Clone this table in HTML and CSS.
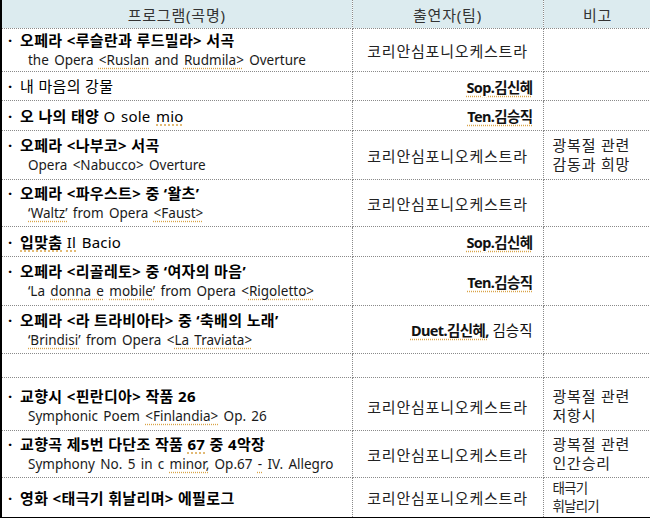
FILE: index.html
```html
<!DOCTYPE html>
<html lang="ko">
<head>
<meta charset="utf-8">
<title>프로그램</title>
<link rel="stylesheet" href="styles.css">
</head>
<body>
<table class="prog">
  <colgroup><col class="c1"><col class="c2"><col class="c3"></colgroup>
  <thead>
    <tr class="hd"><th>프로그램(곡명)</th><th>출연자(팀)</th><th>비고</th></tr>
  </thead>
  <tbody>
    <tr class="h43">
      <td class="t"><div class="ko"><span class="bul">·</span><b>오페라 &lt;루슬란과 루드밀라&gt; 서곡</b></div><div class="en">the Opera <span class="sq">&lt;Ruslan</span> and <span class="sq">Rudmila&gt;</span> Overture</div></td>
      <td class="ctr">코리안심포니오케스트라</td><td class="n"></td>
    </tr>
    <tr class="h29">
      <td class="t"><div class="ko"><span class="bul">·</span>내 마음의 강물</div></td>
      <td class="rt"><b class="sq">Sop.김신혜</b></td><td class="n"></td>
    </tr>
    <tr class="h30">
      <td class="t"><div class="ko"><span class="bul">·</span><b>오 나의 태양</b> <span class="lat">O sole <span class="sq">mio</span></span></div></td>
      <td class="rt"><b class="sq">Ten.김승직</b></td><td class="n"></td>
    </tr>
    <tr class="h49">
      <td class="t"><div class="ko"><span class="bul">·</span><b>오페라 &lt;나부코&gt; 서곡</b></div><div class="en">Opera &lt;Nabucco&gt; Overture</div></td>
      <td class="ctr">코리안심포니오케스트라</td><td class="n">광복절 관련<br>감동과 희망</td>
    </tr>
    <tr class="h47">
      <td class="t"><div class="ko"><span class="bul">·</span><b>오페라 &lt;파우스트&gt; 중 ‘왈츠’</b></div><div class="en"><span class="sq">‘Waltz’</span> from Opera <span class="sq">&lt;Faust&gt;</span></div></td>
      <td class="ctr">코리안심포니오케스트라</td><td class="n"></td>
    </tr>
    <tr class="h30">
      <td class="t"><div class="ko"><span class="bul">·</span><b class="sq">입맞춤</b> <span class="lat"><span class="sq">Il</span> Bacio</span></div></td>
      <td class="rt"><b class="sq">Sop.김신혜</b></td><td class="n"></td>
    </tr>
    <tr class="h49">
      <td class="t"><div class="ko"><span class="bul">·</span><b>오페라 &lt;리골레토&gt; 중 ‘여자의 마음’</b></div><div class="en">‘La <span class="sq">donna e</span> <span class="sq">mobile’</span> from Opera &lt;<span class="sq">Rigoletto&gt;</span></div></td>
      <td class="rt"><b class="sq">Ten.김승직</b></td><td class="n"></td>
    </tr>
    <tr class="h48">
      <td class="t"><div class="ko"><span class="bul">·</span><b>오페라 &lt;라 트라비아타&gt; 중 ‘축배의 노래’</b></div><div class="en"><span class="sq">‘Brindisi’</span> from Opera &lt;<span class="sq">La Traviata&gt;</span></div></td>
      <td class="rt"><b class="sq">Duet.김신혜,</b> 김승직</td><td class="n"></td>
    </tr>
    <tr class="h24">
      <td class="t"></td><td></td><td class="n"></td>
    </tr>
    <tr class="h53">
      <td class="t low"><div class="ko"><span class="bul">·</span><b>교향시 &lt;핀란디아&gt; 작품 26</b></div><div class="en">Symphonic Poem <span class="sq">&lt;Finlandia&gt;</span> Op. 26</div></td>
      <td class="ctr low">코리안심포니오케스트라</td><td class="n low">광복절 관련<br>저항시</td>
    </tr>
    <tr class="h47">
      <td class="t"><div class="ko"><span class="bul">·</span><b>교향곡 제5번 다단조 작품 <span class="sq">67</span> 중 4악장</b></div><div class="en">Symphony No. 5 in c <span class="sq">minor,</span> Op.67 <span class="sq">-</span> IV. Allegro</div></td>
      <td class="ctr">코리안심포니오케스트라</td><td class="n">광복절 관련<br>인간승리</td>
    </tr>
    <tr class="h39">
      <td class="t"><div class="ko"><span class="bul">·</span><b>영화 &lt;태극기 휘날리며&gt; 에필로그</b></div></td>
      <td class="ctr">코리안심포니오케스트라</td><td class="n narrow">태극기<br>휘날리기</td>
    </tr>
  </tbody>
</table>
</body>
</html>
```

FILE: styles.css
```css
body {
  margin: 0;
  background: #fff;
}

.prog {
  width: 651px;
  border-collapse: collapse;
  table-layout: fixed;
  font-family: "Noto Sans", "Noto Sans CJK KR", sans-serif;
  font-size: 14px;
  color: #111;
  border-left: 2px solid #000;
  border-bottom: 2px solid #000;
}

.c1 { width: 351px; }
.c2 { width: 191px; }
.c3 { width: 109px; }

.prog th,
.prog td {
  border: 1px dotted #8a8a8a;
  padding: 0;
  vertical-align: middle;
  overflow: hidden;
  white-space: nowrap;
}

.prog thead th {
  background: #dcebef;
  font-weight: normal;
  color: #333;
  height: 28px;
  border-top: none;
  font-size: 15px;
  letter-spacing: 0.8px;
}

.h24 td { height: 23px; }
.h29 td { height: 28px; }
.h30 td { height: 29px; }
.h39 td { height: 38px; }
.h43 td { height: 42px; }
.h47 td { height: 46px; }
.h48 td { height: 47px; }
.h49 td { height: 48px; }
.h53 td { height: 48px; }

.prog td.t {
  padding-left: 6px;
}

.ko {
  line-height: 20px;
  font-size: 15px;
  letter-spacing: 0.35px;
  color: #000;
}

.ko b {
  font-weight: bold;
}

.lat {
  word-spacing: 1.5px;
  letter-spacing: 0.2px;
}

.bul {
  display: inline-block;
  width: 12px;
  font-weight: bold;
}

.en {
  line-height: 20px;
  font-size: 13.5px;
  word-spacing: 1.8px;
  padding-left: 20px;
  color: #1a1a1a;
}

.prog td.ctr {
  text-align: center;
  font-size: 15px;
  letter-spacing: 0.8px;
  color: #222;
}

.prog td.rt {
  text-align: right;
  padding-right: 10px;
  font-size: 14.5px;
  color: #111;
}

.rt b {
  letter-spacing: -0.6px;
}

.prog td.n {
  padding-left: 9px;
  font-size: 15px;
  letter-spacing: 0.8px;
  line-height: 19px;
  color: #222;
}

.prog td.narrow {
  font-size: 13.5px;
  line-height: 18px;
  letter-spacing: -0.8px;
  vertical-align: top;
  padding-top: 1px;
}

.prog td.low {
  padding-top: 4px;
}

.sq {
  text-decoration: underline dotted #d9a448;
  text-underline-offset: 3px;
}
```
